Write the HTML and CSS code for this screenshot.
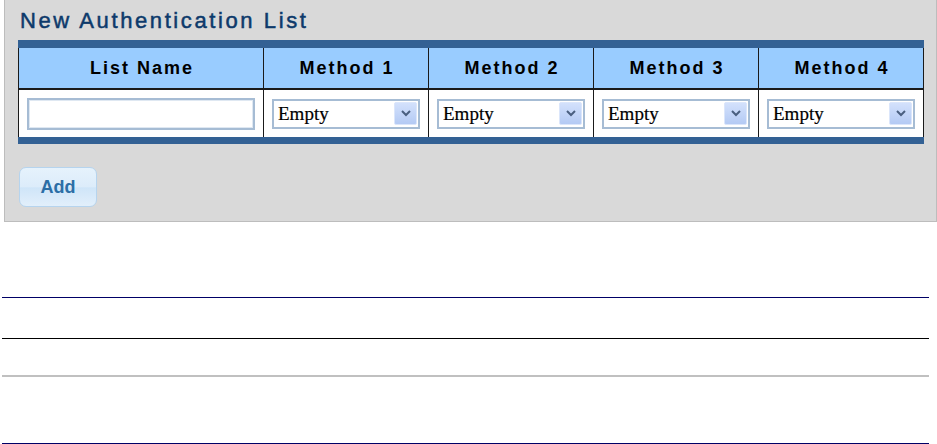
FILE: index.html
```html
<!DOCTYPE html>
<html>
<head>
<meta charset="utf-8">
<link rel="stylesheet" href="styles.css">
</head>
<body>
<div class="panel">
  <h1 class="title">New Authentication List</h1>
  <table class="auth">
    <thead>
      <tr>
        <th class="c-name">List Name</th>
        <th>Method 1</th>
        <th>Method 2</th>
        <th>Method 3</th>
        <th>Method 4</th>
      </tr>
    </thead>
    <tbody>
      <tr>
        <td><div class="textbox"></div></td>
        <td><div class="sel"><span class="sel-text">Empty</span><span class="sel-btn"><svg width="10" height="7" viewBox="0 0 10 7"><path d="M1 1 L5 5 L9 1" fill="none" stroke="#4a5f80" stroke-width="2"/></svg></span></div></td>
        <td><div class="sel"><span class="sel-text">Empty</span><span class="sel-btn"><svg width="10" height="7" viewBox="0 0 10 7"><path d="M1 1 L5 5 L9 1" fill="none" stroke="#4a5f80" stroke-width="2"/></svg></span></div></td>
        <td><div class="sel"><span class="sel-text">Empty</span><span class="sel-btn"><svg width="10" height="7" viewBox="0 0 10 7"><path d="M1 1 L5 5 L9 1" fill="none" stroke="#4a5f80" stroke-width="2"/></svg></span></div></td>
        <td><div class="sel"><span class="sel-text">Empty</span><span class="sel-btn"><svg width="10" height="7" viewBox="0 0 10 7"><path d="M1 1 L5 5 L9 1" fill="none" stroke="#4a5f80" stroke-width="2"/></svg></span></div></td>
      </tr>
    </tbody>
  </table>
  <button class="add-btn">Add</button>
</div>
<div class="rules">
  <div class="rule navy r1"></div>
  <div class="rule black r2"></div>
  <div class="rule gray r3"></div>
  <div class="rule navy r4"></div>
</div>
</body>
</html>
```
FILE: styles.css
```css
html, body {
  margin: 0;
  padding: 0;
  background: #ffffff;
}
body {
  font-family: "Liberation Sans", Arial, sans-serif;
  width: 937px;
  height: 444px;
  overflow: hidden;
}
.panel {
  box-sizing: border-box;
  margin-left: 4px;
  width: 933px;
  height: 222px;
  background: #d9d9d9;
  border: 1px solid #bdbdbd;
  border-top: 0;
  padding: 8px 0 0 13px;
}
.title {
  margin: 0 0 7px 2px;
  font-size: 22px;
  line-height: 25px;
  font-weight: normal;
  color: #0d3a6b;
  letter-spacing: 2.6px;
  -webkit-text-stroke: 0.5px #0d3a6b;
  white-space: nowrap;
}
.auth {
  width: 903px;
  border-collapse: collapse;
  border-top: 8px solid #336194;
  border-bottom: 7px solid #336194;
  border-left: 1px solid #1a1a1a;
  border-right: 1px solid #1a1a1a;
  background: #ffffff;
}
.auth th {
  background: #99ccff;
  height: 40px;
  padding: 0 0 0 2px;
  font-size: 18px;
  font-weight: bold;
  letter-spacing: 2px;
  color: #000;
  border-left: 1px solid #1a1a1a;
  border-bottom: 2px solid #1a1a1a;
  text-align: center;
  width: 164px;
}
.auth th.c-name {
  width: 243px;
}
.auth td {
  height: 47px;
  padding: 0 8px;
  border-left: 1px solid #1a1a1a;
  background: #fff;
}
.auth th:first-child, .auth td:first-child {
  border-left: 0;
}
.textbox {
  box-sizing: border-box;
  height: 32px;
  width: 228px;
  border: 2px solid #a6bcd4;
  outline: 1px solid #dfe8f2;
  outline-offset: -3px;
  background: #fff;
}
.sel {
  box-sizing: border-box;
  display: flex;
  align-items: center;
  justify-content: space-between;
  height: 30px;
  width: 148px;
  border: 2px solid #a6bcd4;
  background: #fff;
  padding: 0 1px 0 4px;
}
.sel-text {
  font-family: "Liberation Serif", "Times New Roman", serif;
  font-size: 19px;
  line-height: 22px;
  color: #000;
  -webkit-text-stroke: 0.2px #000;
}
.sel-btn {
  box-sizing: border-box;
  display: flex;
  align-items: center;
  justify-content: center;
  width: 23px;
  height: 23px;
  background: linear-gradient(#d3e1fc, #b4caf4);
  border: 1px solid #dbe6fb;
  border-radius: 2px;
}
.add-btn {
  display: block;
  margin: 23px 0 0 1px;
  width: 78px;
  height: 40px;
  border: 1px solid #b6d4ee;
  border-radius: 7px;
  background: linear-gradient(#e6f2fc 0%, #dcecfa 50%, #cfe5f8 52%, #e2effb 100%);
  color: #2c6ea6;
  font-family: "Liberation Sans", Arial, sans-serif;
  font-size: 18px;
  font-weight: bold;
  padding: 0;
}
.rules {
  padding: 75px 0 0 2px;
  width: 927px;
}
.rule {
  width: 927px;
}
.navy { height: 1px; background: #000066; }
.black { height: 1px; background: #000000; }
.gray { height: 2px; background: #c0c0c0; }
.r1 { margin-top: 0; }
.r2 { margin-top: 40px; }
.r3 { margin-top: 36px; }
.r4 { margin-top: 66px; }
```
